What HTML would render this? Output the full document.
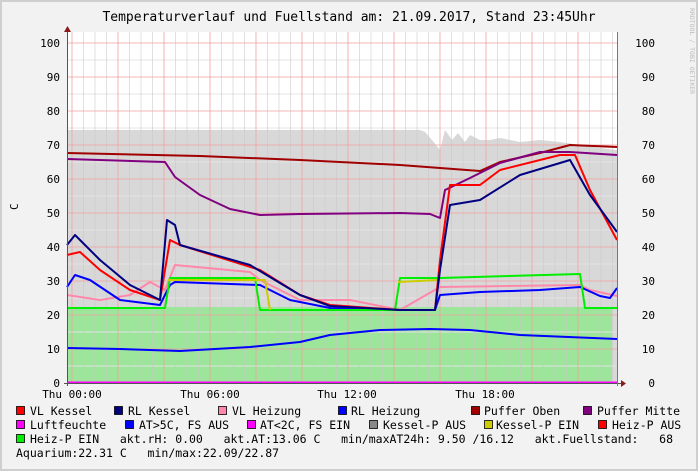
<!DOCTYPE html><html><head><style>body{margin:0;background:#fff}svg{display:block}text{font-family:"DejaVu Sans Mono","Liberation Mono",monospace;fill:#000}</style></head><body>
<svg width="698" height="471" viewBox="0 0 698 471" xmlns="http://www.w3.org/2000/svg">
<rect x="0" y="0" width="698" height="471" fill="#f2f2f2"/>
<rect x="0.5" y="0.5" width="697" height="470" fill="none" stroke="#cfcfcf" stroke-width="3"/>
<text x="349" y="21" font-size="13" text-anchor="middle">Temperaturverlauf und Fuellstand am: 21.09.2017, Stand 23:45Uhr</text>
<text x="690" y="8" font-size="6.5" style="fill:#bbb" transform="rotate(90 690 8)">RRDTOOL / TOBI OETIKER</text>
<rect x="67" y="32" width="550" height="351" fill="#fff"/>
<path d="M67,130 L420,130 L425,132 L432,140 L440,150 L445,130 L452,140 L458,133 L465,142 L470,135 L480,140 L490,140 L500,138 L510,140 L520,142 L540,140 L560,142 L580,145 L600,148 L617,150 L617,383 L67,383Z" fill="#d8d8d8"/>
<rect x="67" y="307" width="545" height="76" fill="#9de59a"/>
<g stroke="#e4e4e4" stroke-width="1">
<path d="M67,60H617M67,94H617M67,128H617M67,162H617M67,196H617M67,230H617M67,264H617M67,298H617M67,332H617M67,366H617"/>
</g>
<g stroke="#c8c8c8" stroke-width="0.8" opacity="0.7">
<path d="M83.5,32V383M95,32V383M106.5,32V383M129.5,32V383M141,32V383M152.5,32V383M175.5,32V383M187,32V383M198.5,32V383M221.5,32V383M233,32V383M244.5,32V383M267.5,32V383M279,32V383M290.5,32V383M313.5,32V383M325,32V383M336.5,32V383M359.5,32V383M371,32V383M382.5,32V383M405.5,32V383M417,32V383M428.5,32V383M451.5,32V383M463,32V383M474.5,32V383M497.5,32V383M509,32V383M520.5,32V383M543.5,32V383M555,32V383M566.5,32V383M589.5,32V383M601,32V383M612.5,32V383"/>
</g>
<g stroke="#f0a0a0" stroke-width="0.8">
<path d="M67,43H617M67,77H617M67,111H617M67,145H617M67,179H617M67,213H617M67,247H617M67,281H617M67,315H617M67,349H617"/>
<path d="M72,32V383M118,32V383M164,32V383M210,32V383M256,32V383M302,32V383M348,32V383M394,32V383M440,32V383M486,32V383M532,32V383M578,32V383"/>
</g>
<g fill="none" stroke-width="2" stroke-linejoin="round">
<polyline stroke="#0000ff" points="67,348 120,349 180,351 250,347 300,342 330,335 380,330 430,329 470,330 520,335 617,339"/>
<polyline stroke="#a00000" points="67,153 200,156 300,160 400,165 480,171 500,162 540,153 570,145 617,147"/>
<polyline stroke="#800080" points="67,159 165,162 175,177 200,195 230,209 260,215 300,214 400,213 430,214 440,218 445,190 470,178 500,163 540,152 570,152 617,155"/>
<polyline stroke="#ff88aa" points="67,295 100,300 130,295 150,282 165,290 175,265 250,272 260,280 300,300 350,300 400,310 440,287 580,285 590,290 617,296"/>
<polyline stroke="#0000ff" points="67,287 75,275 90,280 120,300 160,305 170,285 175,282 260,285 290,300 330,308 400,310 435,310 440,295 480,292 540,290 580,287 600,296 610,298 617,288"/>
<polyline stroke="#00ee00" points="67,308 165,308 170,278 255,278 260,310 395,310 400,278 440,278 580,274 585,308 617,308"/>
<polyline stroke="#cccc00" points="168,280 265,280 270,310"/>
<polyline stroke="#cccc00" points="398,282 438,280"/>
<polyline stroke="#ff0000" points="67,255 80,252 100,270 130,290 160,300 170,240 180,245 260,270 300,295 330,305 400,310 435,310 440,260 450,185 480,185 500,170 560,155 575,155 590,190 617,240"/>
<polyline stroke="#000080" points="67,245 75,235 100,260 130,285 160,300 167,220 175,225 180,245 250,265 300,295 330,306 400,310 435,310 440,270 450,205 480,200 520,175 570,160 590,195 617,232"/>
</g>
<path d="M67,382.5H617" stroke="#ff00ff" stroke-width="2"/>
<path d="M67.5,30V386M64,383.5H621" stroke="#555" stroke-width="1"/>
<path d="M64,32L67.5,26L71,32Z M621,380L626,383.5L621,387Z" fill="#8b1a1a"/>
<path d="M617.5,32V386" stroke="#777"/>
<g font-size="11" text-anchor="end">
<text x="60" y="47">100</text><text x="60" y="81">90</text><text x="60" y="115">80</text><text x="60" y="149">70</text><text x="60" y="183">60</text><text x="60" y="217">50</text><text x="60" y="251">40</text><text x="60" y="285">30</text><text x="60" y="319">20</text><text x="60" y="353">10</text><text x="60" y="387">0</text>
</g>
<g font-size="11" text-anchor="end">
<text x="655" y="47">100</text><text x="655" y="81">90</text><text x="655" y="115">80</text><text x="655" y="149">70</text><text x="655" y="183">60</text><text x="655" y="217">50</text><text x="655" y="251">40</text><text x="655" y="285">30</text><text x="655" y="319">20</text><text x="655" y="353">10</text><text x="655" y="387">0</text>
</g>
<text x="18" y="210" font-size="11" transform="rotate(-90 18 210)">C</text>
<g font-size="11" text-anchor="middle"><text x="72" y="398">Thu 00:00</text><text x="210" y="398">Thu 06:00</text><text x="347" y="398">Thu 12:00</text><text x="485" y="398">Thu 18:00</text></g>
<g stroke="#000" stroke-width="0.8">
<rect x="16.5" y="406.5" width="8" height="8" fill="#ff0000"/><rect x="114.5" y="406.5" width="8" height="8" fill="#000080"/><rect x="218.5" y="406.5" width="8" height="8" fill="#ff88aa"/><rect x="338.5" y="406.5" width="8" height="8" fill="#0000ff"/><rect x="471.5" y="406.5" width="8" height="8" fill="#a00000"/><rect x="583.5" y="406.5" width="8" height="8" fill="#800080"/>
<rect x="16.5" y="420.5" width="8" height="8" fill="#ff00ff"/><rect x="125.5" y="420.5" width="8" height="8" fill="#0000ff"/><rect x="247.5" y="420.5" width="8" height="8" fill="#ff00ff"/><rect x="369.5" y="420.5" width="8" height="8" fill="#888"/><rect x="484.5" y="420.5" width="8" height="8" fill="#cccc00"/><rect x="598.5" y="420.5" width="8" height="8" fill="#ff0000"/>
<rect x="16.5" y="434.5" width="8" height="8" fill="#00ee00"/>
</g>
<g font-size="11.5">
<text x="30" y="415">VL Kessel</text><text x="128" y="415">RL Kessel</text><text x="232" y="415">VL Heizung</text><text x="351" y="415">RL Heizung</text><text x="484" y="415">Puffer Oben</text><text x="597" y="415">Puffer Mitte</text>
<text x="30" y="429">Luftfeuchte</text><text x="139" y="429">AT&gt;5C, FS AUS</text><text x="260" y="429">AT&lt;2C, FS EIN</text><text x="383" y="429">Kessel-P AUS</text><text x="496" y="429">Kessel-P EIN</text><text x="612" y="429">Heiz-P AUS</text>
<text x="30" y="443" xml:space="preserve" textLength="643" lengthAdjust="spacing">Heiz-P EIN   akt.rH: 0.00   akt.AT:13.06 C   min/maxAT24h: 9.50 /16.12   akt.Fuellstand:   68</text>
<text x="16" y="457" xml:space="preserve">Aquarium:22.31 C   min/max:22.09/22.87</text>
</g>
</svg></body></html>
